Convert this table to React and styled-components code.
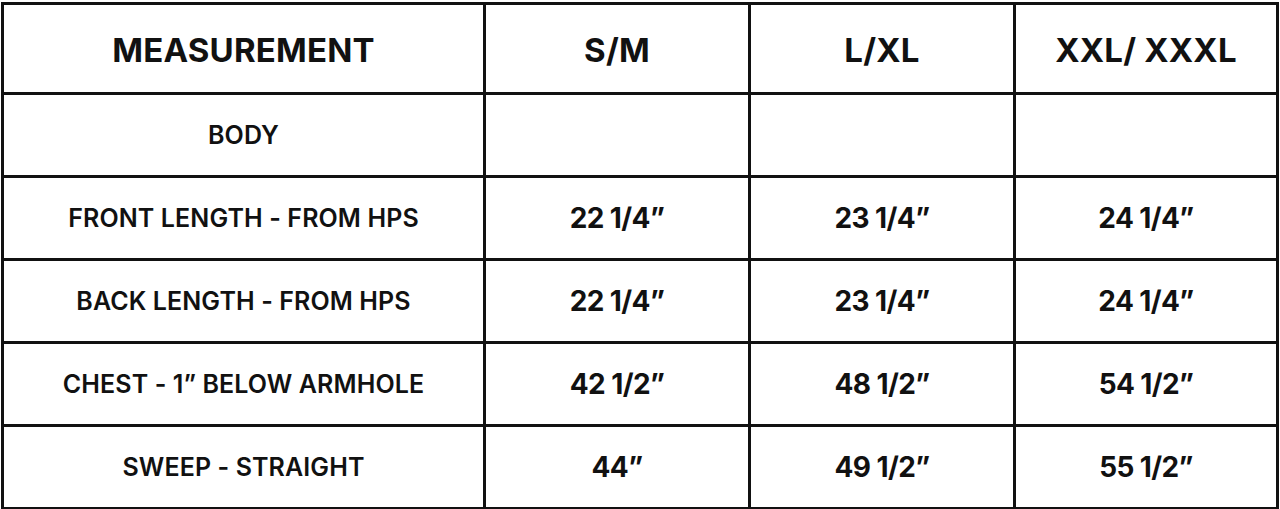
import styled, { createGlobalStyle } from 'styled-components';

const GlobalStyle = createGlobalStyle`
  html, body {
    margin: 0;
    padding: 0;
    background: #fff;
  }
  body {
    font-family: Inter, "Liberation Sans", sans-serif;
    color: #111;
  }
`;

const HEADERS = ['MEASUREMENT', 'S/M', 'L/XL', 'XXL/ XXXL'];

const ROWS = [
  { label: 'BODY', values: ['', '', ''] },
  { label: 'FRONT LENGTH - FROM HPS', values: ['22 1/4”', '23 1/4”', '24 1/4”'] },
  { label: 'BACK LENGTH - FROM HPS', values: ['22 1/4”', '23 1/4”', '24 1/4”'] },
  { label: 'CHEST - 1” BELOW ARMHOLE', values: ['42 1/2”', '48 1/2”', '54 1/2”'] },
  { label: 'SWEEP - STRAIGHT', values: ['44”', '49 1/2”', '55 1/2”'] },
];

const App = () => {
  return (
    <>
      <GlobalStyle />
      <Page>
        <SizeGrid>
          {HEADERS.map((h) => (
            <HeadCell key={h}>{h}</HeadCell>
          ))}
          {ROWS.map((row) => (
            <Row key={row.label}>
              <LabelCell>{row.label}</LabelCell>
              {row.values.map((v, j) => (
                <ValueCell key={j}>{v}</ValueCell>
              ))}
            </Row>
          ))}
        </SizeGrid>
      </Page>
    </>
  );
};

const Page = styled.div`
  padding: 2px 0 0 1px;
`;

const SizeGrid = styled.div`
  width: 1278px;
  box-sizing: border-box;
  display: grid;
  grid-template-columns: 482px 265px 265px 263px;
  grid-auto-rows: 83px;
  grid-template-rows: 90px;
  border-left: 3px solid #111;
  border-top: 3px solid #111;
`;

const Cell = styled.div`
  display: flex;
  align-items: center;
  justify-content: center;
  box-sizing: border-box;
  border-right: 3px solid #111;
  border-bottom: 3px solid #111;
  text-align: center;
  white-space: nowrap;
`;

const HeadCell = styled(Cell)`
  font-size: 33px;
  font-weight: 700;
  letter-spacing: 0.2px;
  padding-top: 2px;
`;

const Row = styled.div`
  display: contents;
`;

const LabelCell = styled(Cell)`
  font-size: 25px;
  font-weight: 600;
  letter-spacing: 0.1px;
`;

const ValueCell = styled(Cell)`
  font-size: 28px;
  font-weight: 700;
  letter-spacing: -0.6px;
`;

export default App;
